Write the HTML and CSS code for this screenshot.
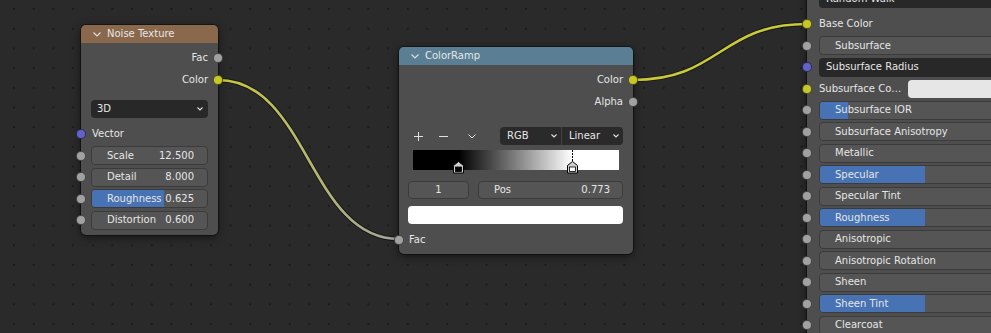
FILE: index.html
```html
<!DOCTYPE html>
<html>

<head>
  <meta charset="utf8">
  <title>Shader Editor</title>
  <link rel="stylesheet" href="styles.css">
</head>

<body>
  <main class="editor">
    <!-- links sit under the nodes -->
    <svg class="links" width="991" height="333" viewBox="0 0 991 333">
      <defs>
        <linearGradient id="fade" gradientUnits="userSpaceOnUse" x1="218" y1="0" x2="399" y2="0">
          <stop offset="0" stop-color="#c9c93a" />
          <stop offset="1" stop-color="#a3a3a3" />
        </linearGradient>
      </defs>
      <path class="wire-shade" d="M218 80 C308 80 309 239 399 239" />
      <path class="wire wire-fade" d="M218 80 C308 80 309 239 399 239" />
      <path class="wire-shade" d="M633 80 C720 80 720 24 807 24" />
      <path class="wire wire-color" d="M633 80 C720 80 720 24 807 24" />
    </svg>

    <section class="node noise">
      <header class="node-header">
        <svg class="caret" viewBox="0 0 8 5"><polyline points="0.5,0.5 4,4 7.5,0.5" /></svg>
        Noise Texture
      </header>
      <div class="node-body">
        <div class="row out">Fac<i class="socket float"></i></div>
        <div class="row out">Color<i class="socket color"></i></div>
        <div class="menu menu-dim">
          <span>3D</span>
          <svg class="caret-sm" viewBox="0 0 6 4"><polyline points="0.5,0.5 3,3 5.5,0.5" /></svg>
        </div>
        <div class="row in vector-row"><i class="socket vector"></i>Vector</div>
        <div class="row in field"><i class="socket float"></i>
          <div class="slider"><span>Scale</span><span>12.500</span></div>
        </div>
        <div class="row in field"><i class="socket float"></i>
          <div class="slider"><span>Detail</span><span>8.000</span></div>
        </div>
        <div class="row in field"><i class="socket float"></i>
          <div class="slider"><b class="fill" style="width: 62.5%"></b><span>Roughness</span><span>0.625</span></div>
        </div>
        <div class="row in field"><i class="socket float"></i>
          <div class="slider"><span>Distortion</span><span>0.600</span></div>
        </div>
      </div>
    </section>

    <section class="node ramp-node">
      <header class="node-header">
        <svg class="caret" viewBox="0 0 8 5"><polyline points="0.5,0.5 4,4 7.5,0.5" /></svg>
        ColorRamp
      </header>
      <div class="node-body">
        <div class="row out">Color<i class="socket color"></i></div>
        <div class="row out">Alpha<i class="socket float"></i></div>
        <div class="ramp-tools">
          <span class="tool"><svg viewBox="0 0 9 9"><path d="M4.5 0v9M0 4.5h9" /></svg></span>
          <span class="tool"><svg viewBox="0 0 9 9"><path d="M0 4.5h9" /></svg></span>
          <span class="tool tool-more"><svg class="caret" viewBox="0 0 8 5"><polyline points="0.5,0.5 4,4 7.5,0.5" /></svg></span>
          <div class="combo">
            <div class="combo-part">RGB<svg class="caret-sm" viewBox="0 0 6 4"><polyline points="0.5,0.5 3,3 5.5,0.5" /></svg></div>
            <div class="combo-part">Linear<svg class="caret-sm" viewBox="0 0 6 4"><polyline points="0.5,0.5 3,3 5.5,0.5" /></svg></div>
          </div>
        </div>
        <div class="ramp">
          <svg class="stops" width="206" height="24" viewBox="0 0 206 24">
            <path class="active-line" d="M159.5 0V11" />
            <path class="stop" d="M40.5 15.5L45.5 11.5L50.5 15.5V23H40.5Z" />
            <rect class="stop-fill" x="42.5" y="17" width="6" height="4.5" fill="#000" />
            <path class="stop" d="M154.5 15.5L159.5 11.5L164.5 15.5V23H154.5Z" />
            <rect class="stop-fill" x="156.5" y="17" width="6" height="4.5" fill="#fff" />
          </svg>
        </div>
        <div class="stop-row">
          <div class="num num-index">1</div>
          <div class="num num-pos"><span>Pos</span><span>0.773</span></div>
        </div>
        <div class="ramp-swatch"></div>
        <div class="row in fac-row"><i class="socket float"></i>Fac</div>
      </div>
    </section>

    <section class="node principled">
      <div class="node-body">
        <div class="menu menu-wide">Random Walk</div>
        <div class="row in first"><i class="socket color"></i>Base Color</div>
        <div class="row in"><i class="socket float"></i>
          <div class="slider"><span>Subsurface</span></div>
        </div>
        <div class="row in"><i class="socket vector"></i>
          <div class="menu vector-field">Subsurface Radius</div>
        </div>
        <div class="row in"><i class="socket color"></i>
          <span class="row-label">Subsurface Co…</span>
          <div class="color-swatch"></div>
        </div>
        <div class="row in"><i class="socket float"></i>
          <div class="slider"><b class="fill" style="width: 13.2%"></b><span>Subsurface IOR</span></div>
        </div>
        <div class="row in"><i class="socket float"></i>
          <div class="slider"><span>Subsurface Anisotropy</span></div>
        </div>
        <div class="row in"><i class="socket float"></i>
          <div class="slider"><span>Metallic</span></div>
        </div>
        <div class="row in"><i class="socket float"></i>
          <div class="slider"><b class="fill" style="width: 50%"></b><span>Specular</span></div>
        </div>
        <div class="row in"><i class="socket float"></i>
          <div class="slider"><span>Specular Tint</span></div>
        </div>
        <div class="row in"><i class="socket float"></i>
          <div class="slider"><b class="fill" style="width: 50%"></b><span>Roughness</span></div>
        </div>
        <div class="row in"><i class="socket float"></i>
          <div class="slider"><span>Anisotropic</span></div>
        </div>
        <div class="row in"><i class="socket float"></i>
          <div class="slider"><span>Anisotropic Rotation</span></div>
        </div>
        <div class="row in"><i class="socket float"></i>
          <div class="slider"><span>Sheen</span></div>
        </div>
        <div class="row in"><i class="socket float"></i>
          <div class="slider"><b class="fill" style="width: 50%"></b><span>Sheen Tint</span></div>
        </div>
        <div class="row in"><i class="socket float"></i>
          <div class="slider"><span>Clearcoat</span></div>
        </div>
      </div>
    </section>
  </main>
</body>

</html>
```

FILE: styles.css
```css
body {
  margin: 0;
  overflow: hidden;
  font: 10px/1 "DejaVu Sans", sans-serif;
  color: #e6e6e6;
  background: #2a2a2a;
}

.editor {
  position: relative;
  width: 991px;
  height: 333px;
  overflow: hidden;
  background-color: #2a2a2a;
  background-image: radial-gradient(circle, #1c1c1c 1px, transparent 1.4px);
  background-size: 19.7px 19.7px;
  background-position: 4.15px -0.85px;
}

/* links */

.links {
  position: absolute;
  left: 0;
  top: 0;
}

.wire,
.wire-shade {
  fill: none;
}

.wire-shade {
  stroke: rgba(0, 0, 0, 0.45);
  stroke-width: 4.5;
}

.wire {
  stroke-width: 2.6;
}

.wire-fade {
  stroke: url(#fade);
}

.wire-color {
  stroke: #c9c93a;
}

/* nodes */

.node {
  position: absolute;
  background: #4e4e4e;
  border-radius: 5px;
  box-shadow: 0 0 0 1px rgba(0, 0, 0, 0.4), 0 2px 9px rgba(0, 0, 0, 0.55);
}

.noise {
  left: 81px;
  top: 25px;
  width: 137px;
}

.ramp-node {
  left: 399px;
  top: 47px;
  width: 234px;
}

.principled {
  left: 807px;
  top: -19px;
  width: 234px;
}

.node-header {
  display: flex;
  align-items: center;
  gap: 6px;
  height: 18px;
  padding-left: 12px;
  border-radius: 5px 5px 0 0;
}

.noise .node-header {
  background: #8a684c;
}

.ramp-node .node-header {
  background: #5a7f94;
}

.caret,
.caret-sm {
  fill: none;
  stroke: #e0e0e0;
  stroke-width: 1.1;
}

.caret {
  width: 8px;
  height: 5px;
}

.caret-sm {
  width: 6px;
  height: 4px;
}

.node-body {
  display: flex;
  flex-direction: column;
  padding: 4px 0;
}

.row {
  position: relative;
  display: flex;
  align-items: center;
  height: 22px;
  padding: 0 10px;
}

.row.out {
  justify-content: flex-end;
}

.socket {
  position: absolute;
  top: 50%;
  width: 10px;
  height: 10px;
  margin-top: -5px;
  box-sizing: border-box;
  border-radius: 50%;
  border: 1px solid rgba(0, 0, 0, 0.55);
}

.row.in .socket {
  left: -5px;
}

.row.out .socket {
  right: -5px;
}

.socket.float {
  background: #a1a1a1;
}

.socket.color {
  background: #c7c729;
}

.socket.vector {
  background: #6363c7;
}

/* widgets */

.menu {
  display: flex;
  align-items: center;
  justify-content: space-between;
  box-sizing: border-box;
  height: 18px;
  padding: 0 5px 0 6px;
  background: #282828;
  border-radius: 4px;
}

.slider,
.num {
  position: relative;
  display: flex;
  align-items: center;
  box-sizing: border-box;
  background: #555;
  border: 1px solid #3b3b3b;
  border-radius: 4px;
  overflow: hidden;
}

.slider {
  flex: 1;
  justify-content: space-between;
  height: 19px;
  padding: 0 13px 0 15px;
}

.slider .fill {
  position: absolute;
  left: 0;
  top: 0;
  bottom: 0;
  background: #4772b3;
}

.slider span {
  position: relative;
  white-space: nowrap;
}

/* noise texture */

.noise .menu-dim {
  margin: 9px 10px 0;
}

.noise .vector-row {
  margin-top: 5px;
  padding-left: 11px;
}

.row.field {
  height: 21.5px;
}

/* color ramp */

.ramp-node .node-body {
  padding-bottom: 3px;
}

.ramp-tools {
  display: flex;
  align-items: center;
  height: 18px;
  margin-top: 14px;
  padding: 0 10px 0 9px;
  gap: 5px;
}

.tool {
  display: flex;
  align-items: center;
  justify-content: center;
  width: 20px;
  height: 18px;
}

.tool svg {
  width: 9px;
  height: 9px;
  fill: none;
  stroke: #e0e0e0;
  stroke-width: 1;
}

.tool .caret {
  width: 8px;
  height: 5px;
}

.tool-more {
  margin-left: 4px;
}

.combo {
  display: flex;
  width: 123px;
  height: 18px;
  margin-left: auto;
  background: #2a2a2a;
  border-radius: 4px;
}

.combo-part {
  flex: 1;
  display: flex;
  align-items: center;
  justify-content: space-between;
  padding: 0 4px 0 7px;
}

.combo-part + .combo-part {
  border-left: 1px solid #444;
}

.ramp {
  position: relative;
  height: 20px;
  margin: 5px 14px 0;
  background: linear-gradient(90deg, #000 22.2%, #fff 77.3%);
}

.stops {
  position: absolute;
  left: 0;
  top: 0;
  overflow: visible;
}

.active-line {
  stroke: #000;
  stroke-width: 1;
  stroke-dasharray: 2 1;
}

.stop {
  fill: #cfcfcf;
  stroke: #000;
  stroke-width: 1;
}

.stop-fill {
  stroke: #000;
  stroke-width: 0.8;
}

.stop-row {
  display: flex;
  gap: 9px;
  height: 18px;
  margin-top: 11px;
  padding: 0 10px 0 9px;
}

.num-index {
  justify-content: center;
  width: 61px;
}

.num-pos {
  flex: 1;
  justify-content: space-between;
  padding: 0 12px 0 15px;
}

.ramp-swatch {
  height: 18px;
  margin: 6.5px 10px 0 9px;
  background: #fff;
  border-radius: 4px;
}

.fac-row {
  margin-top: 5px;
}

/* principled bsdf */

.principled .node-body {
  padding-top: 8px;
}

.principled .menu-wide {
  height: 19px;
  margin: 0 10px 0 12px;
  padding-left: 7px;
}

.principled .row {
  height: 21.5px;
  padding: 0 10px 0 12px;
}

.principled .row.first {
  margin-top: 5.5px;
}

.vector-field {
  flex: 1;
  height: 19px;
  padding-left: 7px;
}

.row-label {
  width: 89px;
  white-space: nowrap;
}

.color-swatch {
  flex: 1;
  height: 18px;
  background: #e6e6e6;
  border-radius: 4px;
}
```
